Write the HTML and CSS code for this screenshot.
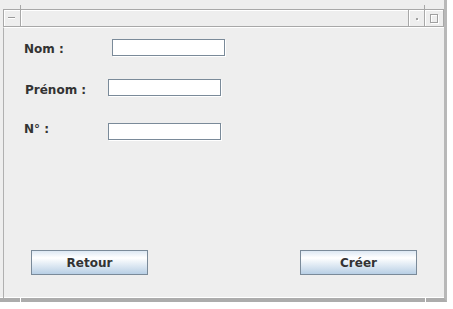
FILE: index.html
```html
<!DOCTYPE html>
<html lang="fr">

<head>
  <meta charset="UTF-8">
  <title>Nouveau client</title>
  <link rel="stylesheet" href="styles.css">
</head>

<body>
  <div class="window">
    <!-- coins du cadre -->
    <span class="notch notch-tl"></span>
    <span class="notch notch-tr"></span>
    <span class="notch notch-bl"></span>
    <span class="notch notch-br"></span>

    <div class="titlebar">
      <div class="tb-icon"><span class="minus"></span></div>
      <div class="tb-title"></div>
      <div class="tb-btn"><span class="dot"></span></div>
      <div class="tb-btn tb-max"><span class="square"></span></div>
    </div>

    <div class="content">
      <form class="fields">
        <div class="row row-nom">
          <label for="nom">Nom :</label>
          <input type="text" id="nom">
        </div>
        <div class="row row-prenom">
          <label for="prenom">Prénom :</label>
          <input type="text" id="prenom">
        </div>
        <div class="row row-num">
          <label for="num">N° :</label>
          <input type="text" id="num">
        </div>
      </form>

      <div class="actions">
        <button type="button">Retour</button>
        <button type="button">Créer</button>
      </div>
    </div>
  </div>
</body>

</html>
```

FILE: styles.css
```css
/* fenêtre interne style Metal / Ocean */
body {
  margin: 0;
  padding: 0;
  background: #ffffff;
  font-family: "DejaVu Sans", Verdana, sans-serif;
}

.window {
  position: relative;
  width: 447px;
  height: 302px;
  box-sizing: border-box;
  padding: 9px 0 0 3px;
  background: #eeeeee;
  border-right: 3px solid #b8b8b8;
  border-bottom: 4px solid #acacac;
  box-shadow: inset 0 -1px 0 #ffffff;
}

/* petites encoches aux coins */
.notch {
  position: absolute;
  background: #a8a8a8;
}

.notch-tl {
  left: 20px;
  top: 5px;
  width: 1px;
  height: 4px;
}

.notch-tr {
  left: 424px;
  top: 5px;
  width: 1px;
  height: 4px;
}

.notch-bl {
  left: 20px;
  bottom: -4px;
  width: 1px;
  height: 4px;
  background: #ffffff;
}

.notch-br {
  left: 425px;
  bottom: -4px;
  width: 1px;
  height: 4px;
  background: #ffffff;
}

/* barre de titre */
.titlebar {
  display: flex;
  width: 441px;
  height: 18px;
  box-sizing: border-box;
  border: 1px solid #a8a8a8;
}

.tb-icon {
  position: relative;
  width: 16px;
  border-right: 1px solid #a8a8a8;
  box-shadow: inset 1px 1px 0 #ffffff;
}

.tb-title {
  flex: 1;
  box-shadow: inset 1px 1px 0 #ffffff;
}

.tb-btn {
  position: relative;
  width: 15px;
  border-left: 1px solid #a8a8a8;
  border-right: 1px solid #a8a8a8;
  box-shadow: inset 1px 1px 0 #ffffff;
}

.tb-max {
  width: 18px;
  border-left: 0;
  border-right: 0;
}

.minus {
  position: absolute;
  left: 4px;
  top: 7px;
  width: 7px;
  height: 1px;
  background: #9a9a9a;
  box-shadow: 0 1px 0 #ffffff;
}

.dot {
  position: absolute;
  left: 7px;
  top: 8px;
  width: 2px;
  height: 2px;
  background: #a0a0a0;
  box-shadow: 1px 1px 0 #ffffff;
}

.square {
  position: absolute;
  left: 5px;
  top: 4px;
  width: 6px;
  height: 7px;
  border: 1px solid #a0a0a0;
  box-shadow: inset 1px 1px 0 #ffffff, 1px 1px 0 #ffffff;
}

/* contenu */
.content {
  display: flex;
  flex-direction: column;
  height: 271px;
  box-sizing: border-box;
  border-left: 1px solid #b0b0b0;
  border-top: 1px solid #ffffff;
  padding: 11px 0 23px 20px;
}

.fields {
  margin: 0;
  display: flex;
  flex-direction: column;
}

.row {
  display: flex;
  align-items: flex-start;
  height: 18px;
}

.row label {
  width: 84px;
  font-size: 12px;
  font-weight: bold;
  line-height: 14px;
  color: #333333;
}

.row input {
  width: 113px;
  height: 17px;
  box-sizing: border-box;
  margin: 0;
  padding: 0 2px;
  border: 1px solid #7a8a99;
  background: #ffffff;
  box-shadow: 1px 1px 0 #ffffff;
  outline: none;
}

.row-nom label {
  margin-top: 3px;
}

.row-nom input {
  margin-left: 4px;
}

.row-prenom {
  margin-top: 22px;
}

.row-prenom label {
  margin-top: 4px;
  padding-left: 1px;
  width: 83px;
}

.row-num {
  margin-top: 26px;
}

.row-num label {
  margin-top: -1px;
}

/* boutons */
.actions {
  display: flex;
  gap: 152px;
  margin-top: auto;
  padding-left: 7px;
}

.actions button {
  width: 117px;
  height: 25px;
  margin: 0;
  padding: 0;
  border: 1px solid #7a8a99;
  background: linear-gradient(#dde8f3 0%, #ffffff 30%, #b8cfe5 100%);
  font-family: "DejaVu Sans", Verdana, sans-serif;
  font-size: 12px;
  font-weight: bold;
  color: #333333;
}
```
